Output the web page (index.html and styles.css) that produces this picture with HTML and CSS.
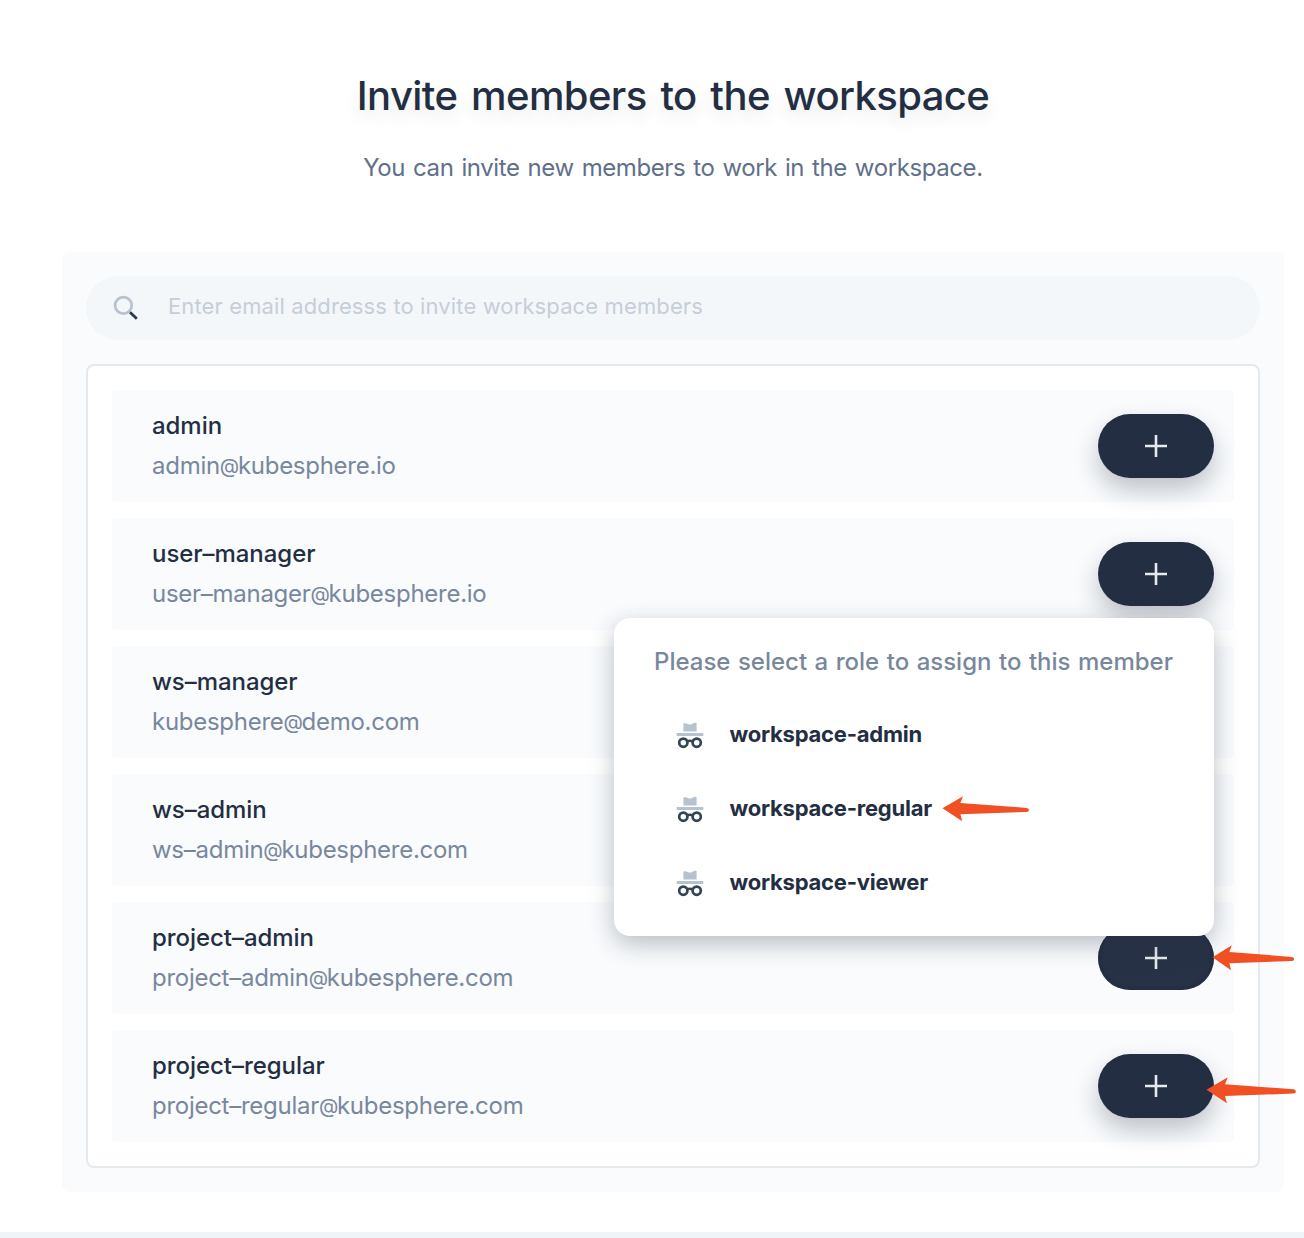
FILE: index.html
```html
<!DOCTYPE html>
<html lang="en">
<head>
<meta charset="utf-8">
<title>Invite members to the workspace</title>
<link rel="stylesheet" href="styles.css">
</head>
<body>
<svg class="defs" width="0" height="0" aria-hidden="true">
  <symbol id="plus" viewBox="0 0 24 24"><path d="M12 1v22M1 12h22" fill="none" stroke="#e6eaee" stroke-width="2.6"/></symbol>
  <symbol id="role" viewBox="0 0 32 32">
    <path d="M9.4 4.6Q11.5 3.8 13.8 4.9Q16 6 18.2 4.9Q20.5 3.5 22.6 4V12.6H9.4Z" fill="#b6c2cd"/>
    <path d="M2.7 14h26.6v3H2.7z" fill="#b6c2cd"/>
    <path d="M13 22.4q3-1.4 6 0" fill="none" stroke="#324558" stroke-width="2.4"/>
    <circle cx="9.3" cy="23.7" r="4.1" fill="none" stroke="#324558" stroke-width="2.7"/>
    <circle cx="22.7" cy="23.7" r="4.1" fill="none" stroke="#324558" stroke-width="2.7"/>
  </symbol>
  <symbol id="arrow" viewBox="0 0 90 28">
    <path d="M.5 13.3L21 1.3L18.4 8L84.7 12.9Q87 13.1 87 15Q87 17 84.7 17L18.4 19.3L20.2 26.2Z" fill="#f05024"/>
  </symbol>
</svg>
<main class="dialog">
  <header class="head">
    <h1>Invite members to the workspace</h1>
    <p>You can invite new members to work in the workspace.</p>
  </header>
  <section class="panel">
    <div class="search">
      <svg width="32" height="32" viewBox="0 0 32 32" fill="none"><circle cx="13.4" cy="13.4" r="8.3" stroke="#b6c2cd" stroke-width="2.7"/><path d="M20 20.2l6.8 6.6" stroke="#2b3a4b" stroke-width="2.8"/></svg>
      <span>Enter email addresss to invite workspace members</span>
    </div>
    <ul class="members">
      <li class="member"><div><strong>admin</strong><p>admin<i>@</i>kubesphere.io</p></div><button class="add" aria-label="Add"><svg><use href="#plus"/></svg></button></li>
      <li class="member"><div><strong>user–manager</strong><p>user–manager<i>@</i>kubesphere.io</p></div><button class="add" aria-label="Add"><svg><use href="#plus"/></svg></button></li>
      <li class="member"><div><strong>ws–manager</strong><p>kubesphere<i>@</i>demo.com</p></div></li>
      <li class="member"><div><strong>ws–admin</strong><p>ws–admin<i>@</i>kubesphere.com</p></div></li>
      <li class="member"><div><strong>project–admin</strong><p>project–admin<i>@</i>kubesphere.com</p></div><button class="add active" aria-label="Add"><svg><use href="#plus"/></svg></button>
        <div class="popover">
          <h2>Please select a role to assign to this member</h2>
          <ul>
            <li><svg><use href="#role"/></svg><span>workspace-admin</span></li>
            <li><svg><use href="#role"/></svg><span>workspace-regular</span></li>
            <li><svg><use href="#role"/></svg><span>workspace-viewer</span></li>
          </ul>
        </div>
      </li>
      <li class="member"><div><strong>project–regular</strong><p>project–regular<i>@</i>kubesphere.com</p></div><button class="add" aria-label="Add"><svg><use href="#plus"/></svg></button></li>
    </ul>
  </section>
</main>
<div class="footer"></div>
<svg class="arrow role-arrow" width="90" height="28"><use href="#arrow"/></svg>
<svg class="arrow admin-arrow" width="85" height="28" viewBox="0 0 90 28" preserveAspectRatio="none"><use href="#arrow" width="90" height="28"/></svg>
<svg class="arrow regular-arrow" width="93" height="29" viewBox="0 0 90 28" preserveAspectRatio="none"><use href="#arrow" width="90" height="28"/></svg>
</body>
</html>
```
FILE: styles.css
```css
* { box-sizing: border-box; }
body {
  margin: 0;
  height: 1238px;
  position: relative;
  display: flex;
  flex-direction: column;
  overflow: hidden;
  background: #fff;
  color: #242e42;
  font-family: Inter, "Liberation Sans", sans-serif;
}
h1, h2, p, ul { margin: 0; padding: 0; list-style: none; }
.defs { position: absolute; }
.dialog { flex: 1; padding: 66px 20px 0 62px; }
.head { height: 186px; text-align: center; }
h1 {
  font-size: 40px;
  line-height: 60px;
  font-weight: 550;
  letter-spacing: -0.6px;
  word-spacing: 3.7px;
  text-shadow: 0 8px 16px rgba(36, 46, 66, 0.1);
}
.head p {
  margin-top: 22px;
  font-size: 24px;
  line-height: 40px;
  letter-spacing: -0.4px;
  word-spacing: 1.6px;
  color: #5f708a;
}
.panel { padding: 24px; border-radius: 8px; background: #f9fbfd; }
.search {
  display: flex;
  align-items: center;
  gap: 26px;
  height: 64px;
  padding: 0 24px;
  border-radius: 32px;
  background: #f3f7fa;
}
.search span {
  margin-top: -4px;
  font-size: 22px;
  line-height: 40px;
  letter-spacing: 0.12px;
  color: #c7ced8;
}
.members {
  display: flex;
  flex-direction: column;
  gap: 16px;
  margin-top: 24px;
  padding: 24px;
  border: 2px solid #e3e9ef;
  border-radius: 8px;
  background: #fff;
}
.member {
  position: relative;
  display: flex;
  align-items: center;
  justify-content: space-between;
  height: 112px;
  padding: 0 20px 0 40px;
  border-radius: 4px;
  background: #f9fbfd;
  font-size: 24px;
  line-height: 40px;
}
.member strong { display: block; font-weight: 550; letter-spacing: -0.05px; }
.member p { letter-spacing: -0.27px; color: #79879c; }
.member i {
  margin-right: -1px;
  font-style: normal;
  font-size: 20px;
  line-height: 1;
  vertical-align: 1px;
}
.add {
  display: flex;
  align-items: center;
  justify-content: center;
  width: 116px;
  height: 64px;
  padding: 0;
  border: 0;
  border-radius: 32px;
  background: #242e42;
  box-shadow: 0 12px 24px rgba(36, 46, 66, 0.28);
}
.add svg { width: 24px; height: 24px; }
.add.active { background: #283246; box-shadow: inset 0 0 4px #1c2438; }
.popover {
  position: absolute;
  right: 20px;
  bottom: 78px;
  z-index: 2;
  width: 600px;
  height: 318px;
  padding: 24px 40px;
  border-radius: 16px;
  background: #fff;
  box-shadow: 0 8px 24px rgba(36, 46, 66, 0.3);
}
h2 {
  font-size: 24px;
  line-height: 40px;
  font-weight: 500;
  word-spacing: 1.1px;
  white-space: nowrap;
  color: #79879c;
}
.popover ul { margin-top: 16px; }
.popover li {
  display: flex;
  align-items: center;
  gap: 24px;
  height: 74px;
  padding-left: 20px;
  font-size: 22px;
  font-weight: 650;
  letter-spacing: -0.22px;
}
.popover li span { margin: -2px 0 0 -0.5px; }
.popover li svg { width: 32px; height: 32px; }
.footer { height: 6px; background: #eff4f9; }
.arrow { position: absolute; z-index: 3; }
.role-arrow { left: 942px; top: 795px; }
.admin-arrow { left: 1212px; top: 944px; }
.regular-arrow { left: 1206px; top: 1076px; }
```
